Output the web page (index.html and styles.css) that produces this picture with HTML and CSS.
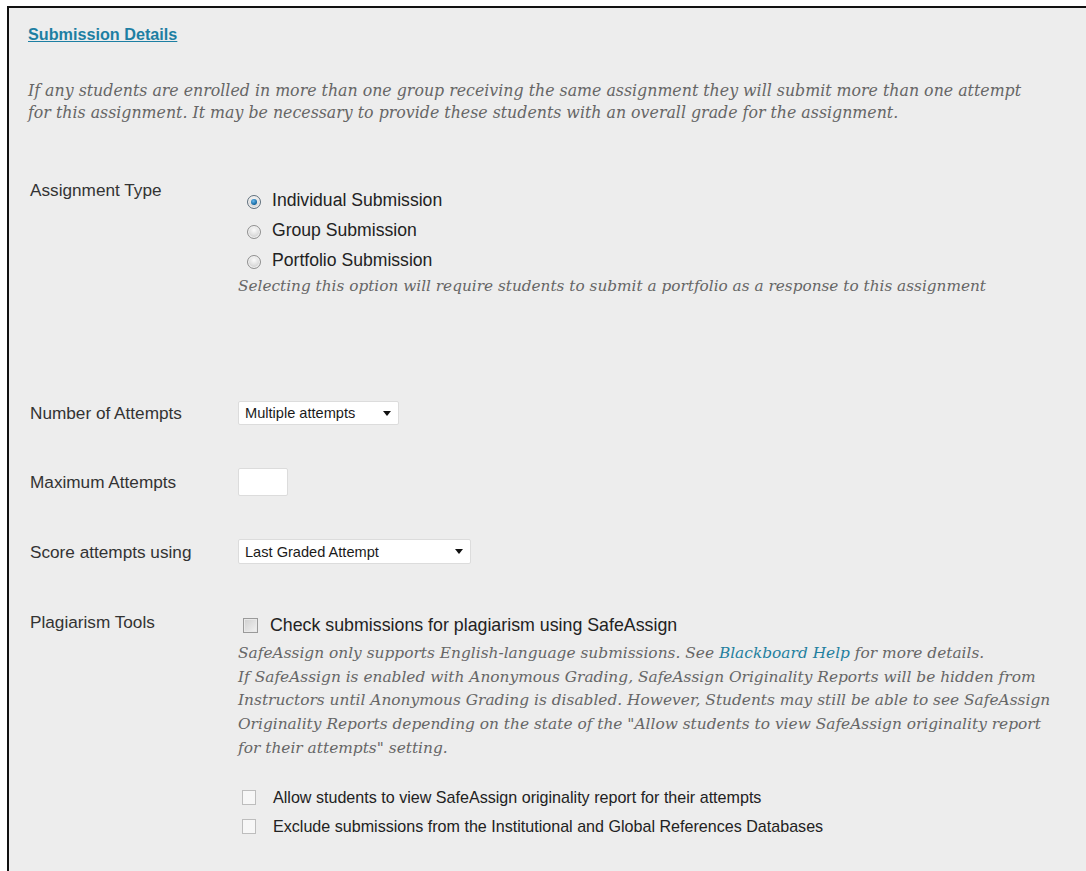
FILE: index.html
```html
<!DOCTYPE html>
<html lang="en">
<head>
<meta charset="utf-8">
<title>Submission Details</title>
<link rel="stylesheet" href="styles.css">
</head>
<body>
<div class="panel">
  <h2 class="section-title"><a href="#">Submission Details</a></h2>
  <p class="note intro">If any students are enrolled in more than one group receiving the same assignment they will submit more than one attempt for this assignment. It may be necessary to provide these students with an overall grade for the assignment.</p>

  <div class="field field-type">
    <div class="field-label">Assignment Type</div>
    <div class="field-control">
      <label class="option"><span class="radio checked"></span>Individual Submission</label>
      <label class="option"><span class="radio"></span>Group Submission</label>
      <label class="option"><span class="radio"></span>Portfolio Submission</label>
      <p class="note hint">Selecting this option will require students to submit a portfolio as a response to this assignment</p>
    </div>
  </div>

  <div class="field field-attempts">
    <div class="field-label">Number of Attempts</div>
    <div class="field-control">
      <div class="select select-short"><span>Multiple attempts</span><i class="caret"></i></div>
    </div>
  </div>

  <div class="field field-max">
    <div class="field-label">Maximum Attempts</div>
    <div class="field-control">
      <div class="textbox"></div>
    </div>
  </div>

  <div class="field field-score">
    <div class="field-label">Score attempts using</div>
    <div class="field-control">
      <div class="select select-long"><span>Last Graded Attempt</span><i class="caret"></i></div>
    </div>
  </div>

  <div class="field field-plag">
    <div class="field-label">Plagiarism Tools</div>
    <div class="field-control">
      <label class="check-main"><span class="checkbox"></span>Check submissions for plagiarism using SafeAssign</label>
      <p class="note safe-note">SafeAssign only supports English-language submissions. See <a href="#">Blackboard Help</a> for more details.<br>If SafeAssign is enabled with Anonymous Grading, SafeAssign Originality Reports will be hidden from Instructors until Anonymous Grading is disabled. However, Students may still be able to see SafeAssign Originality Reports depending on the state of the "Allow students to view SafeAssign originality report for their attempts" setting.</p>
      <div class="sub-options">
        <label class="check-sub"><span class="checkbox flat"></span>Allow students to view SafeAssign originality report for their attempts</label>
        <label class="check-sub"><span class="checkbox flat"></span>Exclude submissions from the Institutional and Global References Databases</label>
      </div>
    </div>
  </div>
</div>
</body>
</html>
```

FILE: styles.css
```css
html, body {
  margin: 0;
  padding: 0;
  background: #ffffff;
}

body {
  height: 871px;
  overflow: hidden;
  font-family: "Liberation Sans", Arial, sans-serif;
  color: #2b2b2b;
}

.panel {
  margin: 6px 0 0 7px;
  border-top: 2px solid #111;
  border-left: 2px solid #111;
  background: #ededed;
  min-height: 880px;
  padding: 16px 0 0 19px;
  box-sizing: border-box;
}

.section-title {
  margin: 0;
  font-size: 16.2px;
  line-height: 20px;
  font-weight: bold;
}

.section-title a {
  color: #1d7fa3;
  text-decoration: underline;
}

.note {
  font-family: "DejaVu Serif", Georgia, serif;
  font-style: italic;
  color: #666666;
  margin: 0;
}

.note a {
  color: #1f7f9f;
  text-decoration: none;
}

.intro {
  margin-top: 36px;
  font-size: 15.8px;
  line-height: 22px;
  width: 1000px;
}

.field {
  display: grid;
  grid-template-columns: 208px 1fr;
  padding-left: 2px;
}

.field-label {
  font-size: 17.2px;
  line-height: 20px;
  color: #333;
}

.field-type {
  margin-top: 56px;
}

.field-type .field-control {
  padding-top: 5px;
}

.option {
  display: flex;
  align-items: center;
  height: 30px;
  font-size: 17.6px;
  color: #222;
}

.radio {
  width: 14px;
  height: 14px;
  margin: 4px 11px 0 9px;
  border-radius: 50%;
  box-sizing: border-box;
  border: 1px solid #8f8f8f;
  background: radial-gradient(circle at 50% 35%, #fbfbfb 0, #e2e2e2 45%, #bdbdbd 100%);
  box-shadow: inset 0 0 0 1px #f3f3f3;
  position: relative;
  flex: none;
}

.radio.checked {
  border-color: #5f6f7c;
}

.radio.checked::after {
  content: "";
  position: absolute;
  left: 3px;
  top: 3px;
  width: 6px;
  height: 6px;
  border-radius: 50%;
  background: radial-gradient(circle at 40% 35%, #66b8ee 0, #1c6fa8 60%, #0f4f80 100%);
}

.hint {
  font-size: 15.3px;
  line-height: 22px;
}

.field-attempts {
  margin-top: 104px;
  align-items: center;
}

.field-max {
  margin-top: 43px;
  align-items: center;
}

.field-score {
  margin-top: 43px;
  align-items: center;
}

.select {
  display: flex;
  align-items: center;
  justify-content: space-between;
  height: 24px;
  box-sizing: border-box;
  background: #fff;
  border: 1px solid #dcdcdc;
  border-radius: 2px;
  padding: 0 6px 0 6px;
  font-size: 14.6px;
  color: #1a1a1a;
}

.select-short {
  width: 161px;
}

.select-long {
  width: 233px;
  height: 25px;
}

.caret {
  width: 0;
  height: 0;
  border-left: 4.5px solid transparent;
  border-right: 4.5px solid transparent;
  border-top: 5px solid #111;
  margin-right: 1px;
}

.textbox {
  width: 50px;
  height: 28px;
  box-sizing: border-box;
  background: #fff;
  border: 1px solid #dcdcdc;
  border-radius: 2px;
}

.field-plag {
  margin-top: 48px;
}

.field-plag .field-control {
  padding-top: 1px;
}

.check-main {
  display: flex;
  align-items: center;
  height: 24px;
  font-size: 17.8px;
  color: #222;
}

.checkbox {
  flex: none;
  width: 15px;
  height: 15px;
  box-sizing: border-box;
  margin: 0 12px 0 5px;
  border: 1px solid #9a9a9a;
  background: linear-gradient(135deg, #cfcfcf 0, #f2f2f2 100%);
  box-shadow: inset 0 0 0 1px #e9e9e9;
}

.checkbox.flat {
  width: 14px;
  height: 15px;
  margin: 0 17px 0 4px;
  border: 1px solid #bdbdbd;
  background: #f7f7f7;
  box-shadow: none;
}

.safe-note {
  margin-top: 5px;
  font-size: 15.4px;
  line-height: 23.7px;
  width: 820px;
}

.sub-options {
  margin-top: 22px;
}

.check-sub {
  display: flex;
  align-items: center;
  height: 29px;
  font-size: 16.1px;
  color: #222;
}
```
